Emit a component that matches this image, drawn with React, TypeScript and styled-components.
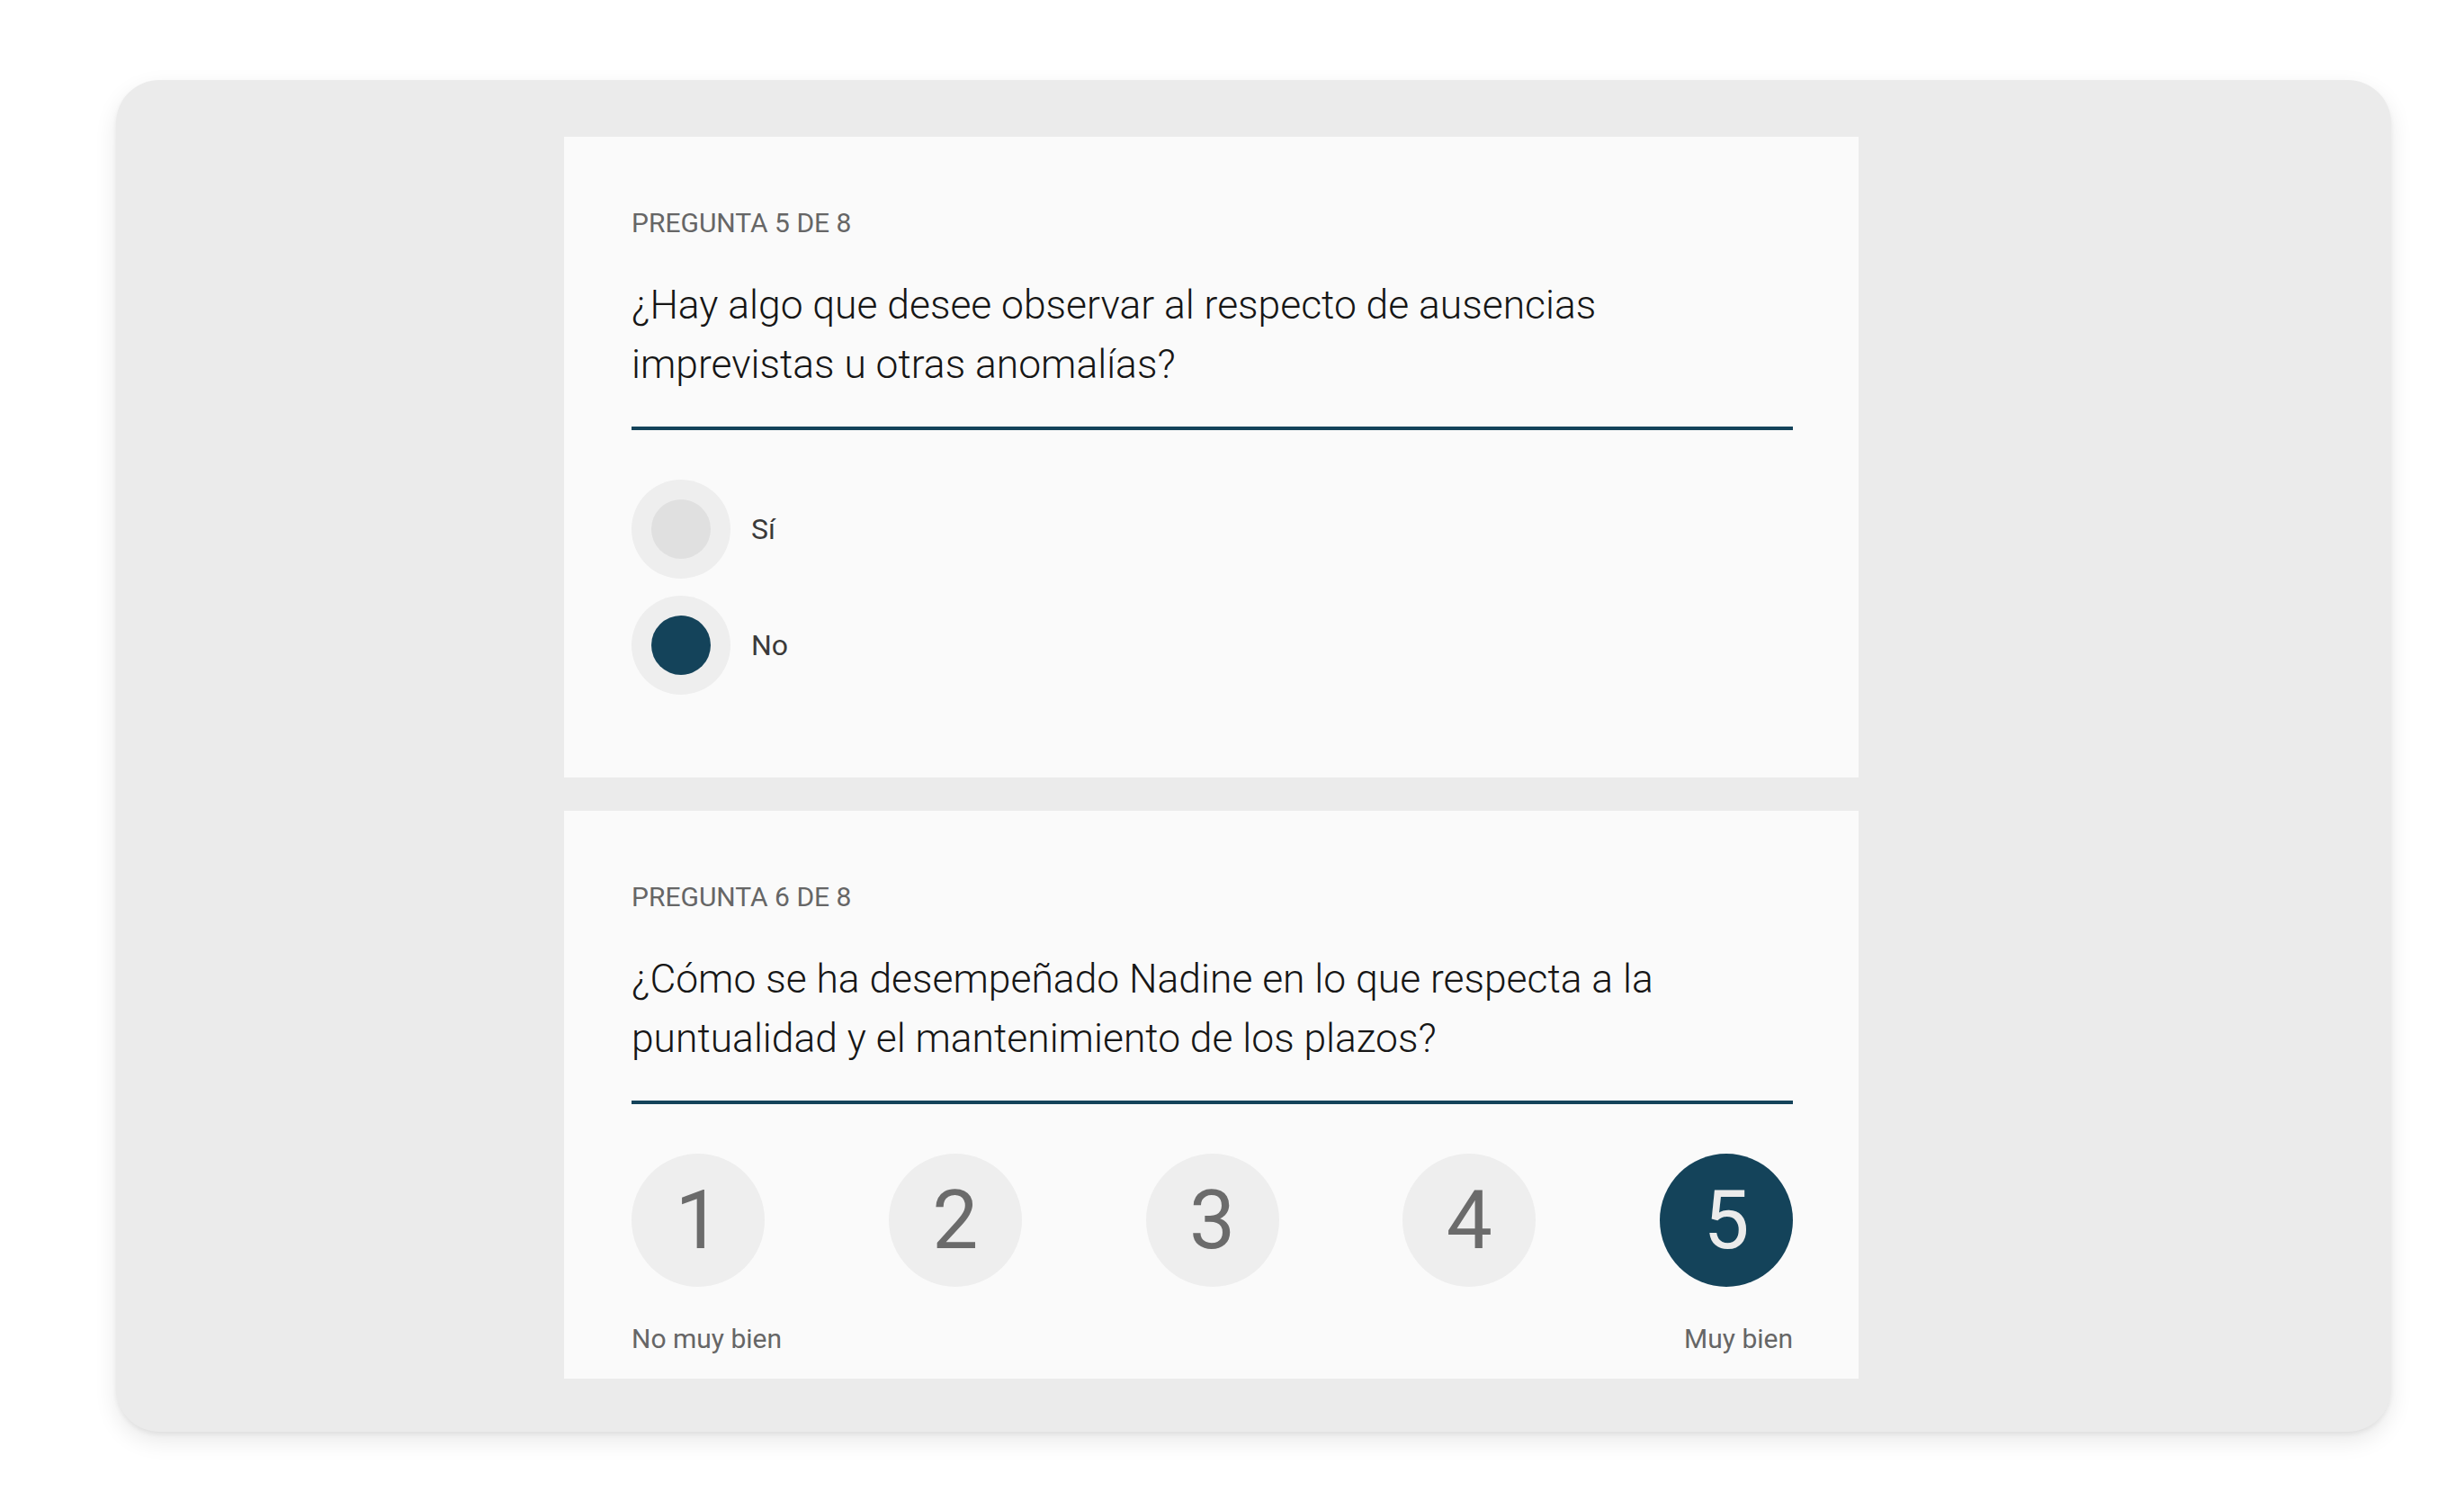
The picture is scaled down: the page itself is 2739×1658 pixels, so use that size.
import React from 'react';
import styled, { createGlobalStyle } from 'styled-components';

const GlobalStyle = createGlobalStyle`
  html, body {
    margin: 0;
    padding: 0;
    background: #ffffff;
  }
  body {
    font-family: Roboto, "Liberation Sans", Arial, sans-serif;
    -webkit-font-smoothing: antialiased;
  }
`;

const Page = styled.div`
  padding: 89px 81px 64px 129px;
`;

const Panel = styled.div`
  display: flex;
  flex-direction: column;
  gap: 37px;
  padding: 63px 0 59px 498px;
  background: #ebebeb;
  border-radius: 48px;
  box-shadow: 0 3px 5px rgba(0, 0, 0, 0.06), 0 10px 26px rgba(0, 0, 0, 0.09);
`;

const Card = styled.section<{ $bottom: number }>`
  width: 1439px;
  box-sizing: border-box;
  padding: 79px 73px ${(p) => p.$bottom}px 75px;
  background: #fafafa;
`;

const Counter = styled.div`
  font-size: 30px;
  line-height: 33px;
  font-weight: 400;
  color: #666666;
  text-transform: uppercase;
`;

const Question = styled.h2`
  margin: 42px 0 0;
  padding-bottom: 36px;
  border-bottom: 4px solid #14435a;
  font-size: 44.4px;
  line-height: 66px;
  font-weight: 300;
  color: #161616;
`;

const Options = styled.div`
  display: flex;
  flex-direction: column;
  gap: 19px;
  margin-top: 55px;
`;

const Option = styled.label`
  display: flex;
  align-items: center;
  gap: 23px;
  font-size: 32px;
  color: #3a3a3a;
`;

const RadioRing = styled.span`
  display: flex;
  align-items: center;
  justify-content: center;
  width: 110px;
  height: 110px;
  border-radius: 50%;
  background: #eeeeee;
`;

const RadioDot = styled.span<{ $checked: boolean }>`
  width: 66px;
  height: 66px;
  border-radius: 50%;
  background: ${(p) => (p.$checked ? '#14435a' : '#e0e0e0')};
`;

const Scale = styled.div`
  display: flex;
  justify-content: space-between;
  margin-top: 55px;
`;

const ScaleButton = styled.div<{ $active: boolean }>`
  display: flex;
  align-items: center;
  justify-content: center;
  width: 148px;
  height: 148px;
  border-radius: 50%;
  background: ${(p) => (p.$active ? '#14435a' : '#eeeeee')};
  color: ${(p) => (p.$active ? '#ebebeb' : '#6b6b6b')};
  font-size: 91px;
  line-height: 1;
`;

const ScaleLabels = styled.div`
  display: flex;
  justify-content: space-between;
  margin-top: 41px;
  font-size: 30px;
  line-height: 33px;
  color: #666666;
`;

const App: React.FC = () => {
  return (
    <Page>
      <GlobalStyle />
      <Panel>
        <Card $bottom={92}>
          <Counter>Pregunta 5 de 8</Counter>
          <Question>
            ¿Hay algo que desee observar al respecto de ausencias
            <br />
            imprevistas u otras anomalías?
          </Question>
          <Options>
            {['Sí', 'No'].map((opt) => (
              <Option key={opt}>
                <RadioRing>
                  <RadioDot $checked={opt === 'No'} />
                </RadioRing>
                {opt}
              </Option>
            ))}
          </Options>
        </Card>
        <Card $bottom={28}>
          <Counter>Pregunta 6 de 8</Counter>
          <Question>
            ¿Cómo se ha desempeñado Nadine en lo que respecta a la
            <br />
            puntualidad y el mantenimiento de los plazos?
          </Question>
          <Scale>
            {[1, 2, 3, 4, 5].map((n) => (
              <ScaleButton key={n} $active={n === 5}>
                {n}
              </ScaleButton>
            ))}
          </Scale>
          <ScaleLabels>
            <span>No muy bien</span>
            <span>Muy bien</span>
          </ScaleLabels>
        </Card>
      </Panel>
    </Page>
  );
};

export default App;
